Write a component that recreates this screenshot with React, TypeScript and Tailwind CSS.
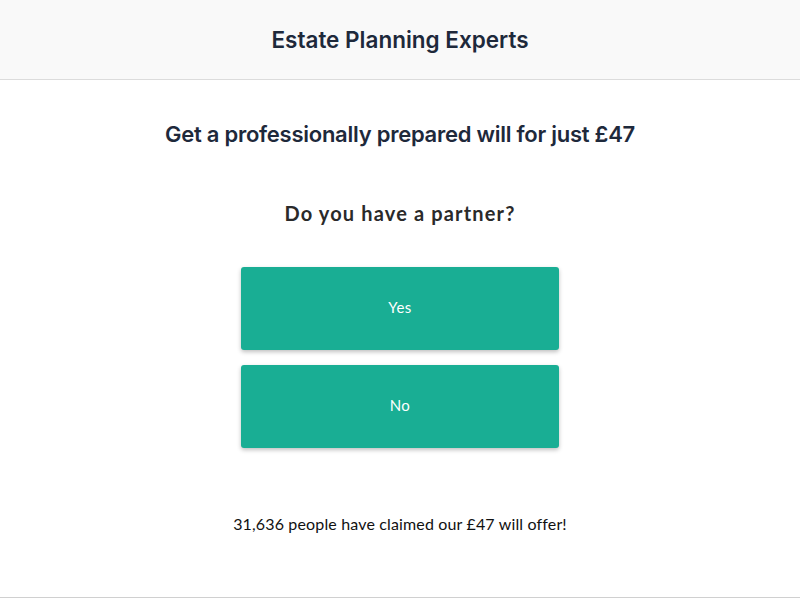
export default function App() {
  return (
    <div className="min-h-[600px] w-full bg-white flex flex-col">
      <header className="h-[80px] bg-[#f9f9f9] border-b border-[#dcdcdc] flex items-center justify-center">
        <h1 className="text-[22.5px] font-semibold text-[#1e293b] font-['Inter',sans-serif] tracking-[0px]">
          Estate Planning Experts
        </h1>
      </header>
      <main className="flex-1 flex flex-col items-center">
        <h2 className="mt-[40px] text-[22px] font-semibold text-[#1e293b] font-['Inter',sans-serif] leading-[28px] tracking-[-0.25px]">
          Get a professionally prepared will for just £47
        </h2>
        <h3 className="mt-[51px] text-[20px] font-bold text-[#2a2a2a] font-['Lato',sans-serif] leading-[28px] tracking-[1.15px]">
          Do you have a partner?
        </h3>
        <div className="mt-[40px] flex flex-col gap-[15px]">
          <button className="w-[318px] h-[83px] pb-[2px] rounded-[3px] bg-[#19ae94] text-white text-[15px] font-['Lato',sans-serif] tracking-[0.5px] shadow-[0_2px_4px_rgba(0,0,0,0.25)]">
            Yes
          </button>
          <button className="w-[318px] h-[83px] pb-[2px] rounded-[3px] bg-[#19ae94] text-white text-[15px] font-['Lato',sans-serif] tracking-[0.5px] shadow-[0_2px_4px_rgba(0,0,0,0.25)]">
            No
          </button>
        </div>
        <p className="mt-[64px] text-[16px] text-[#111] font-['Lato',sans-serif] leading-[24px] tracking-[0.15px]">
          31,636 people have claimed our £47 will offer!
        </p>
      </main>
      <footer className="h-[3px] border-t border-[#d0d0d0] bg-white" />
    </div>
  );
}
